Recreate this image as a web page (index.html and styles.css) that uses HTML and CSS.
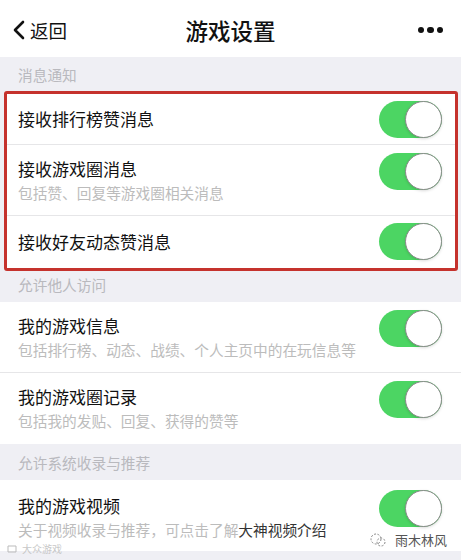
FILE: index.html
```html
<!DOCTYPE html>
<html lang="zh">
<head>
  <meta charset="UTF-8">
  <title>游戏设置</title>
  <link rel="stylesheet" href="styles.css">
</head>
<body>
  <div class="page">
    <!-- barre du haut -->
    <div class="nav">
      <div class="back">
        <svg width="14" height="20" viewBox="0 0 14 20"><path d="M11 2 L3 10 L11 18" fill="none" stroke="#111" stroke-width="2.6" stroke-linecap="round" stroke-linejoin="round"/></svg>
        <span>返回</span>
      </div>
      <div class="title">游戏设置</div>
      <div class="more"><i></i><i></i><i></i></div>
    </div>

    <div class="section-head">消息通知</div>
    <div class="group boxed">
      <div class="row single">
        <div class="text"><div class="label">接收排行榜赞消息</div></div>
        <div class="switch"><span></span></div>
      </div>
      <div class="row">
        <div class="text">
          <div class="label">接收游戏圈消息</div>
          <div class="desc">包括赞、回复等游戏圈相关消息</div>
        </div>
        <div class="switch"><span></span></div>
      </div>
      <div class="row single last">
        <div class="text"><div class="label">接收好友动态赞消息</div></div>
        <div class="switch"><span></span></div>
      </div>
    </div>

    <div class="section-head short">允许他人访问</div>
    <div class="group">
      <div class="row">
        <div class="text">
          <div class="label">我的游戏信息</div>
          <div class="desc">包括排行榜、动态、战绩、个人主页中的在玩信息等</div>
        </div>
        <div class="switch"><span></span></div>
      </div>
      <div class="row last">
        <div class="text">
          <div class="label">我的游戏圈记录</div>
          <div class="desc">包括我的发贴、回复、获得的赞等</div>
        </div>
        <div class="switch"><span></span></div>
      </div>
    </div>

    <div class="section-head tall">允许系统收录与推荐</div>
    <div class="group">
      <div class="row last video">
        <div class="text">
          <div class="label">我的游戏视频</div>
          <div class="desc">关于视频收录与推荐，可点击了解<b>大神视频介绍</b></div>
        </div>
        <div class="switch"><span></span></div>
      </div>
    </div>

    <div class="mark-left">
      <svg width="14" height="10" viewBox="0 0 14 10"><path d="M2 2 h8 v6 h-8 z" fill="none" stroke="#bbb" stroke-width="1"/></svg>
      <span>大众游戏</span>
    </div>
    <div class="mark-right">
      <svg width="18" height="16" viewBox="0 0 18 16"><circle cx="7" cy="7" r="5" fill="none" stroke="#888" stroke-width="1" stroke-dasharray="2 1.5"/><circle cx="12" cy="10" r="4" fill="none" stroke="#888" stroke-width="1" stroke-dasharray="2 1.5"/></svg>
      <span>雨木林风</span>
    </div>
  </div>
</body>
</html>
```

FILE: styles.css
```css
body {
  margin: 0;
  font-family: "Noto Sans CJK SC", "Noto Sans", sans-serif;
  background: #efeff4;
}

.page {
  position: relative;
  width: 461px;
  height: 560px;
  overflow: hidden;
  background: #efeff4;
}

.nav {
  height: 57px;
  background: #fff;
  display: flex;
  align-items: center;
  justify-content: space-between;
  padding: 0 18px 0 12px;
  box-sizing: border-box;
  position: relative;
}

.back {
  display: flex;
  align-items: center;
  gap: 4px;
  font-size: 18.5px;
  color: #111;
  margin-top: 3px;
}

.title {
  position: absolute;
  left: 0;
  right: 0;
  text-align: center;
  font-size: 22.5px;
  font-weight: 500;
  color: #111;
  pointer-events: none;
  margin-top: 3px;
}

.more {
  display: flex;
  gap: 3px;
  margin-top: 3px;
}

.more i {
  width: 6.5px;
  height: 6.5px;
  border-radius: 50%;
  background: #111;
}

.section-head {
  height: 34px;
  padding-left: 18px;
  font-size: 14.7px;
  color: #b9b9be;
  display: flex;
  align-items: center;
}

.section-head.short {
  height: 31px;
  align-items: flex-start;
  padding-top: 3px;
  box-sizing: border-box;
}

.section-head.tall {
  height: 36px;
}

.group {
  background: #fff;
}

.group.boxed {
  margin: 0 3px 0 4px;
  border: 3px solid #c5322d;
  border-radius: 3px;
  padding-bottom: 1px;
}

.row {
  display: flex;
  justify-content: space-between;
  align-items: flex-start;
  height: 71px;
  padding: 12px 19px 0 18px;
  box-sizing: border-box;
  border-bottom: 1px solid #e6e6e8;
}

.boxed .row {
  padding-left: 11px;
  padding-right: 13px;
}

.row.single {
  height: 51px;
  align-items: center;
  padding-top: 0;
}

.row.last {
  border-bottom: none;
}

.row.video {
  padding-top: 14px;
}

.label {
  font-size: 17px;
  line-height: 24px;
  color: #111;
}

.desc {
  font-size: 14.7px;
  line-height: 24px;
  color: #bcbcbc;
  white-space: nowrap;
}

.desc b {
  font-weight: normal;
  color: #333;
}

.switch {
  width: 63px;
  height: 37px;
  border-radius: 19px;
  background: #4cd563;
  position: relative;
  flex-shrink: 0;
  margin-top: -4px;
}

.row.single .switch {
  margin-top: 0;
}

.switch span {
  position: absolute;
  right: 0;
  top: 0;
  width: 37px;
  height: 37px;
  border-radius: 50%;
  background: #fff;
  border: 1px solid #8a8a8a;
  box-sizing: border-box;
  box-shadow: 0 1px 3px rgba(0, 0, 0, 0.15);
}

.mark-right {
  position: absolute;
  right: 14px;
  top: 530px;
  display: flex;
  align-items: center;
  gap: 8px;
  font-size: 13px;
  color: #555;
}

.mark-left {
  position: absolute;
  left: 6px;
  top: 541px;
  display: flex;
  align-items: center;
  gap: 2px;
  font-size: 10px;
  color: #c8c8c8;
}
```
